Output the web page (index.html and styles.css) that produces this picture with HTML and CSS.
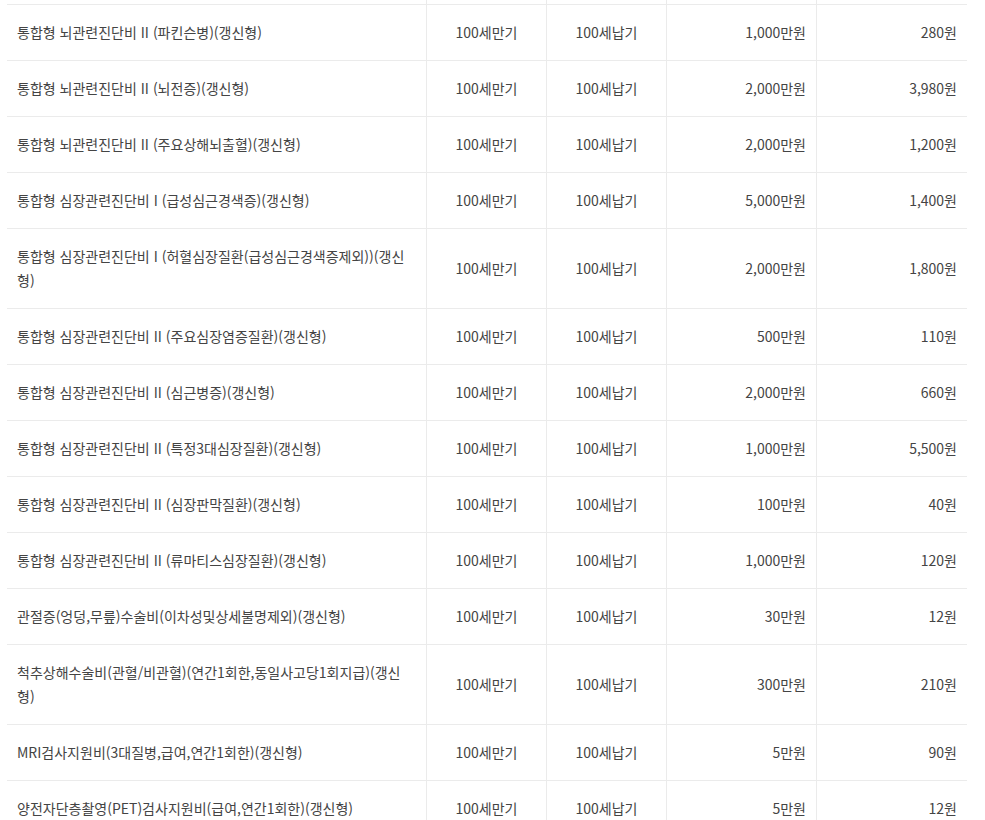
FILE: index.html
```html
<!DOCTYPE html>
<html lang="ko">
<head>
<meta charset="utf-8">
<title>보장내용</title>
<link rel="stylesheet" href="styles.css">
</head>
<body>
<div class="wrap">
<table class="cov">
<colgroup>
<col class="c-name"><col class="c-term"><col class="c-term"><col class="c-amt"><col class="c-amt">
</colgroup>
<tbody>
<tr class="cut"><td></td><td></td><td></td><td></td><td></td></tr>
<tr><td class="name">통합형 뇌관련진단비 II (파킨슨병)(갱신형)</td><td class="mid">100세만기</td><td class="mid">100세납기</td><td class="num">1,000만원</td><td class="num">280원</td></tr>
<tr><td class="name">통합형 뇌관련진단비 II (뇌전증)(갱신형)</td><td class="mid">100세만기</td><td class="mid">100세납기</td><td class="num">2,000만원</td><td class="num">3,980원</td></tr>
<tr><td class="name">통합형 뇌관련진단비 II (주요상해뇌출혈)(갱신형)</td><td class="mid">100세만기</td><td class="mid">100세납기</td><td class="num">2,000만원</td><td class="num">1,200원</td></tr>
<tr><td class="name">통합형 심장관련진단비 I (급성심근경색증)(갱신형)</td><td class="mid">100세만기</td><td class="mid">100세납기</td><td class="num">5,000만원</td><td class="num">1,400원</td></tr>
<tr><td class="name">통합형 심장관련진단비 I (허혈심장질환(급성심근경색증제외))(갱신형)</td><td class="mid">100세만기</td><td class="mid">100세납기</td><td class="num">2,000만원</td><td class="num">1,800원</td></tr>
<tr><td class="name">통합형 심장관련진단비 II (주요심장염증질환)(갱신형)</td><td class="mid">100세만기</td><td class="mid">100세납기</td><td class="num">500만원</td><td class="num">110원</td></tr>
<tr><td class="name">통합형 심장관련진단비 II (심근병증)(갱신형)</td><td class="mid">100세만기</td><td class="mid">100세납기</td><td class="num">2,000만원</td><td class="num">660원</td></tr>
<tr><td class="name">통합형 심장관련진단비 II (특정3대심장질환)(갱신형)</td><td class="mid">100세만기</td><td class="mid">100세납기</td><td class="num">1,000만원</td><td class="num">5,500원</td></tr>
<tr><td class="name">통합형 심장관련진단비 II (심장판막질환)(갱신형)</td><td class="mid">100세만기</td><td class="mid">100세납기</td><td class="num">100만원</td><td class="num">40원</td></tr>
<tr><td class="name">통합형 심장관련진단비 II (류마티스심장질환)(갱신형)</td><td class="mid">100세만기</td><td class="mid">100세납기</td><td class="num">1,000만원</td><td class="num">120원</td></tr>
<tr><td class="name">관절증(엉덩,무릎)수술비(이차성및상세불명제외)(갱신형)</td><td class="mid">100세만기</td><td class="mid">100세납기</td><td class="num">30만원</td><td class="num">12원</td></tr>
<tr><td class="name">척추상해수술비(관혈/비관혈)(연간1회한,동일사고당1회지급)(갱신형)</td><td class="mid">100세만기</td><td class="mid">100세납기</td><td class="num">300만원</td><td class="num">210원</td></tr>
<tr><td class="name">MRI검사지원비(3대질병,급여,연간1회한)(갱신형)</td><td class="mid">100세만기</td><td class="mid">100세납기</td><td class="num">5만원</td><td class="num">90원</td></tr>
<tr><td class="name">양전자단층촬영(PET)검사지원비(급여,연간1회한)(갱신형)</td><td class="mid">100세만기</td><td class="mid">100세납기</td><td class="num">5만원</td><td class="num">12원</td></tr>
</tbody>
</table>
</div>
</body>
</html>
```
FILE: styles.css
```css
html, body {
  margin: 0;
  padding: 0;
  background: #fff;
}
body {
  font-family: "Noto Sans CJK KR", "Noto Sans", sans-serif;
  font-size: 14px;
  color: #444;
}
.wrap {
  padding-left: 7px;
}
.cov {
  width: 960px;
  table-layout: fixed;
  border-collapse: separate;
  border-spacing: 0;
}
.c-name { width: 420px; }
.c-term { width: 120px; }
.c-amt { width: 150px; }
.cov td {
  padding: 15px 10px 16px;
  line-height: 24px;
  vertical-align: middle;
  border-bottom: 1px solid #ebebeb;
  border-right: 1px solid #ebebeb;
}
.cov td:last-child {
  border-right: 0;
}
.cov tr.cut td {
  padding: 0;
  height: 4px;
  line-height: 0;
}
.cov td.mid { text-align: center; }
.cov td.num { text-align: right; }
.cov td.name { text-align: left; }
```
